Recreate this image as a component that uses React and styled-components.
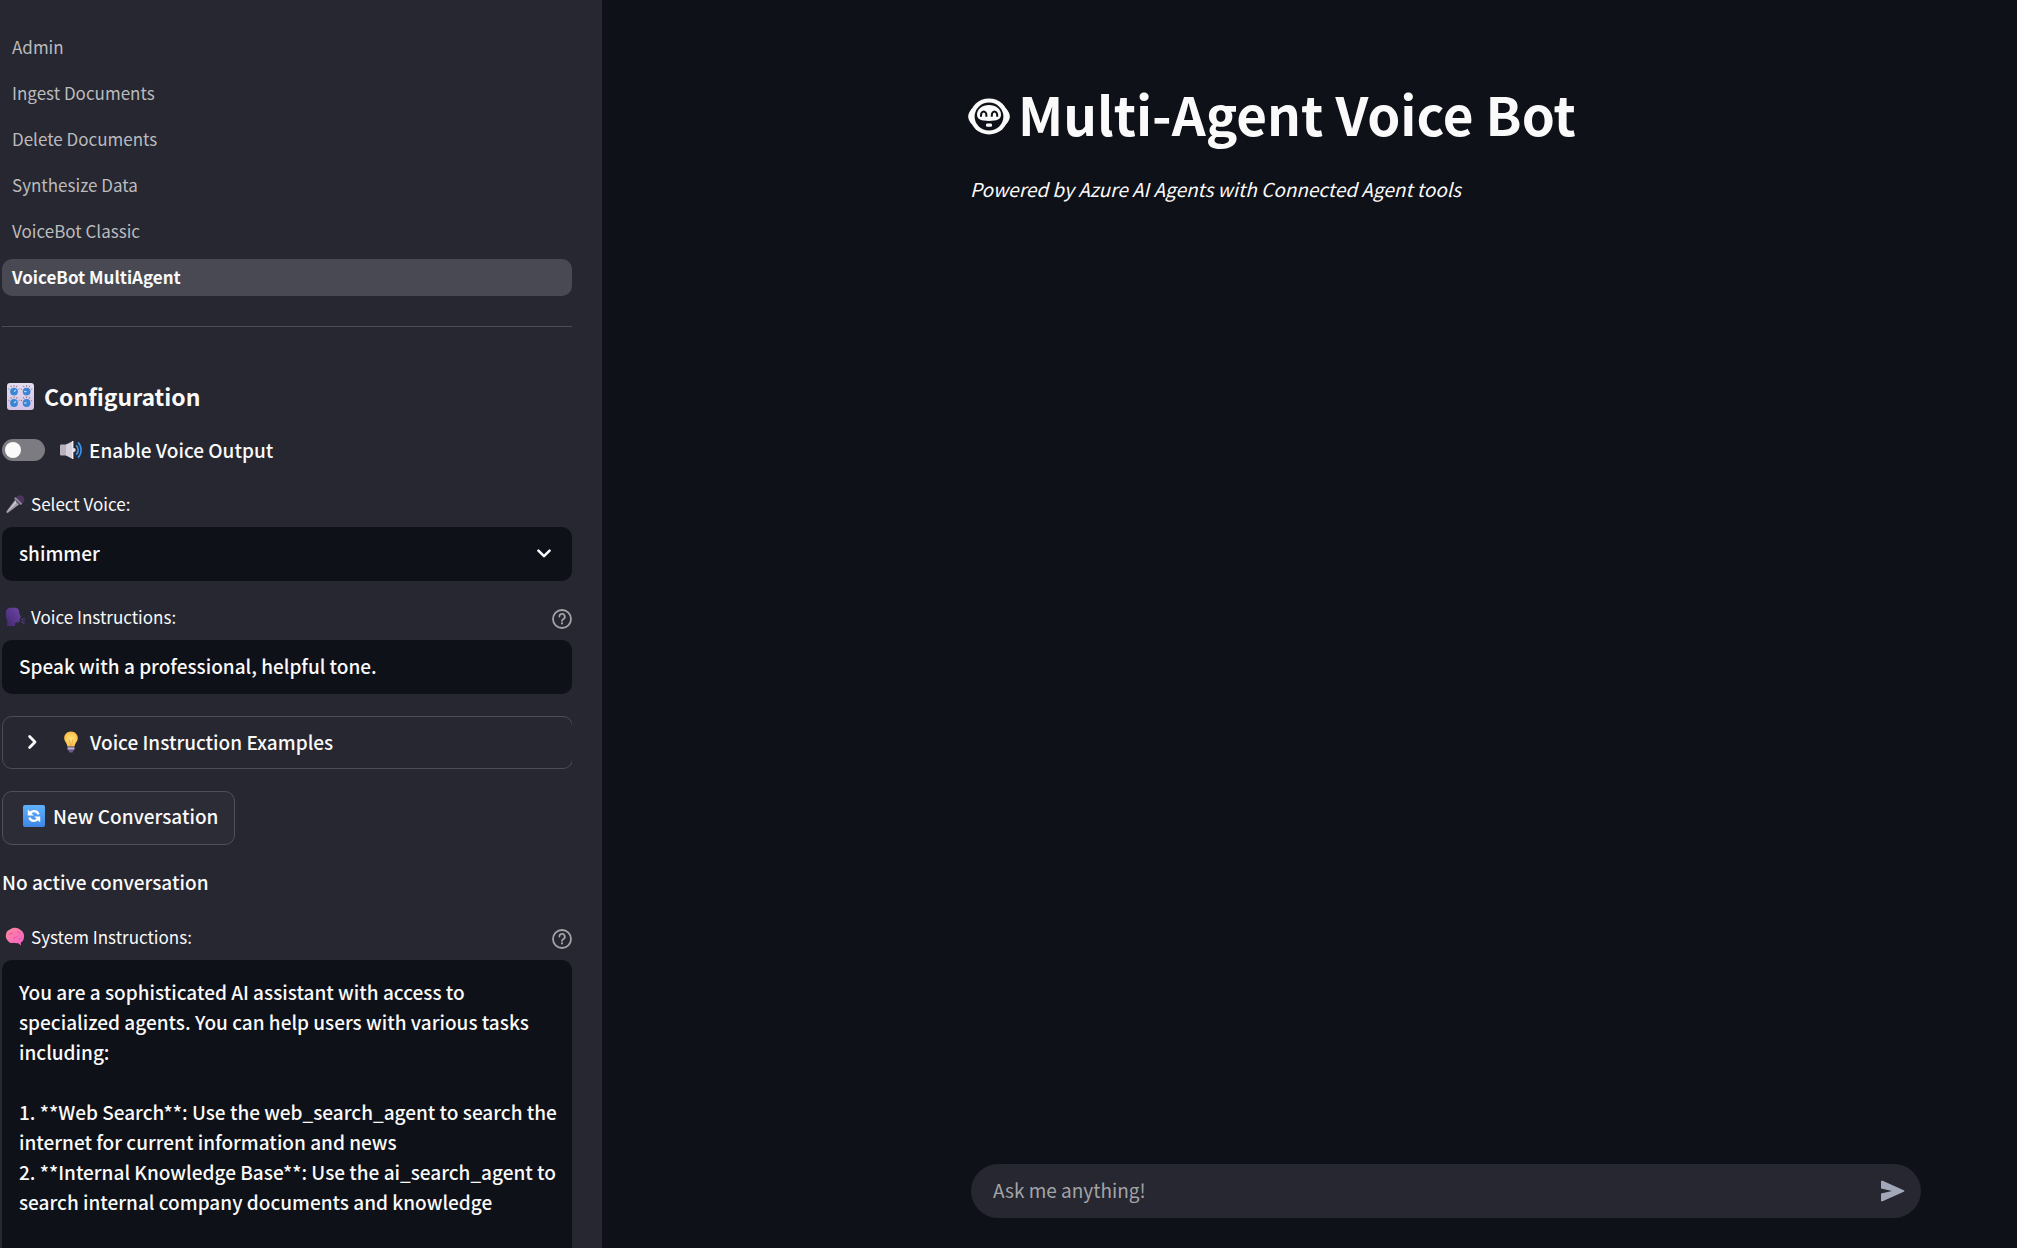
import React, { useId, useState } from "react";
import styled, { createGlobalStyle } from "styled-components";

const GlobalStyle = createGlobalStyle`
  * { box-sizing: border-box; }
  body {
    margin: 0;
    background: #0e1117;
    color: #fafafa;
    font-family: "Noto Sans CJK SC", "Noto Sans", sans-serif;
    font-size: 19px;
    line-height: 30px;
    overflow: hidden;
  }
  button, input, select, textarea { font: inherit; color: inherit; }
`;

const Layout = styled.div`
  display: flex;
  height: 100vh;
`;

const Sidebar = styled.aside`
  flex: 0 0 602px;
  padding: 29px 30px 0 2px;
  background: #262730;
  font-weight: 500;
  overflow: hidden;
`;

const Nav = styled.nav`
  display: flex;
  flex-direction: column;
  gap: 9px;
  padding-bottom: 30px;
  border-bottom: 1px solid #4b4c54;
`;

const NavLink = styled.a`
  height: 37px;
  padding: 0 10px;
  border-radius: 10px;
  font-size: 17px;
  line-height: 36px;
  text-decoration: none;
  color: ${(p) => (p.$active ? "#fafafa" : "#bbbbbe")};
  font-weight: ${(p) => (p.$active ? 700 : 400)};
  background: ${(p) => (p.$active ? "#484953" : "transparent")};
`;

const Panel = styled.section`
  display: flex;
  flex-direction: column;
  gap: 22px;
  padding-top: 51px;
  overflow: hidden;
`;

const PanelTitle = styled.h2`
  display: flex;
  align-items: center;
  gap: 10px;
  margin: 0 0 -4px;
  padding-left: 5px;
  font-size: 23px;
  line-height: 36px;
  font-weight: 700;
`;

const ToggleRow = styled.label`
  display: flex;
  align-items: center;
  height: 36px;
`;

const Toggle = styled.input`
  appearance: none;
  display: flex;
  align-items: center;
  width: 43px;
  height: 22px;
  margin: 0 14px 0 0;
  padding: 0 3px;
  border-radius: 11px;
  background: #7c7b81;
  &::before {
    content: "";
    width: 16px;
    height: 16px;
    border-radius: 50%;
    background: #fafafa;
  }
  &:checked { justify-content: flex-end; background: #ff4b4b; }
`;

const ToggleText = styled.span`
  display: flex;
  align-items: center;
  gap: 6px;
`;

const Field = styled.div`
  display: flex;
  flex-direction: column;
  gap: 11px;
  padding-top: 2px;
`;

const FieldHead = styled.div`
  display: flex;
  align-items: center;
  justify-content: space-between;
  height: 24px;
`;

const Label = styled.label`
  display: flex;
  align-items: center;
  gap: 6px;
  padding-left: 3px;
  font-size: 17px;
  line-height: 24px;
  font-weight: 400;
`;

const HelpButton = styled.button`
  display: flex;
  padding: 3px 0 0;
  border: 0;
  background: none;
  color: #a3a3a7;
`;

const SelectWrap = styled.div`
  display: grid;
  align-items: center;
  > * { grid-area: 1 / 1; }
  > svg { justify-self: end; margin-right: 20px; pointer-events: none; }
`;

const Select = styled.select`
  appearance: none;
  width: 100%;
  height: 54px;
  padding: 0 17px 3px;
  border: 0;
  border-radius: 10px;
  background: #0e1117;
`;

const TextInput = styled.input`
  width: 100%;
  height: 54px;
  padding: 0 17px 3px;
  border: 0;
  border-radius: 10px;
  background: #0e1117;
`;

const TextArea = styled.textarea`
  display: block;
  width: 100%;
  height: 460px;
  padding: 17px 12px 16px 17px;
  border: 0;
  border-radius: 10px;
  background: #0e1117;
  resize: none;
  overflow: hidden;
`;

const Expander = styled.details`
  margin-right: -1px;
  border: 1px solid #4b4c54;
  border-radius: 10px;
`;

const Summary = styled.summary`
  display: flex;
  align-items: center;
  height: 51px;
  padding: 0 20px 2px 19px;
  list-style: none;
  > svg:first-child { margin-right: 18px; }
`;

const SummaryText = styled.span`
  display: flex;
  align-items: center;
  gap: 8px;
`;

const NewButton = styled.button`
  display: flex;
  align-items: center;
  align-self: flex-start;
  gap: 8px;
  height: 54px;
  padding: 0 16px 4px 20px;
  border: 1px solid #4f5058;
  border-radius: 10px;
  background: #2b2c36;
`;

const Status = styled.p`
  margin: 0 0 4px;
`;

const Main = styled.main`
  flex: 1;
  display: flex;
  flex-direction: column;
  align-items: flex-end;
  padding: 80px 96px 30px 32px;
`;

const Column = styled.div`
  display: flex;
  flex-direction: column;
  flex: 1;
  width: 100%;
  max-width: 950px;
`;

const Title = styled.h1`
  display: flex;
  align-items: center;
  gap: 8px;
  margin: 0 0 0 -3px;
  font-size: 53px;
  line-height: 66px;
  font-weight: 700;
  > svg { margin-top: 6px; }
`;

const Tagline = styled.p`
  margin: 28px 0 0 -1px;
  font-style: italic;
`;

const ChatForm = styled.form`
  display: flex;
  align-items: center;
  height: 54px;
  margin-top: auto;
  padding: 0 16px 0 22px;
  border-radius: 27px;
  background: #262730;
`;

const ChatInput = styled.input`
  flex: 1;
  height: 54px;
  padding: 0 0 4px;
  border: 0;
  outline: 0;
  background: none;
  &::placeholder { color: #a3a3a7; opacity: 1; }
`;

const SendButton = styled.button`
  display: flex;
  padding: 0;
  border: 0;
  background: none;
  color: #a3a8b8;
`;

const HelpIcon = () => (
  <svg width="20" height="20" viewBox="0 0 20 20" fill="none" stroke="currentColor" strokeWidth="1.8" strokeLinecap="round">
    <circle cx="10" cy="10" r="9" />
    <path d="M7.4 7.6a2.7 2.7 0 1 1 4 2.4c-1 .6-1.4 1-1.4 1.9" />
    <path d="M10 14.4v.1" strokeWidth="2.1" />
  </svg>
);

const ChevronDown = () => (
  <svg width="16" height="12" viewBox="0 0 16 12" fill="none" stroke="#fafafa" strokeWidth="2.6" strokeLinecap="round" strokeLinejoin="round">
    <path d="M2.4 2.6 8 8.2l5.6-5.6" />
  </svg>
);

const ChevronRight = () => (
  <svg width="20" height="16" viewBox="0 0 20 16" fill="none" stroke="#fafafa" strokeWidth="2.8" strokeLinecap="round" strokeLinejoin="round">
    <path d="M7.600 2.600 13 8l-5.400 5.400" />
  </svg>
);

const KnobsIcon = () => (
  <svg width="27" height="27" viewBox="0 0 27 27">
    <defs>
      <linearGradient id="knobs" x1="0" y1="0" x2="0" y2="1">
        <stop offset="0" stopColor="#e6dcf0" />
        <stop offset="1" stopColor="#d3c3e6" />
      </linearGradient>
    </defs>
    <rect width="27" height="27" rx="3" fill="url(#knobs)" />
    {[[7, 8.6], [19.6, 8.6], [7, 20], [19.6, 20]].map(([x, y], i) => (
      <g key={i}>
        <path
          d={`M${x - 4.6} ${y - 2.2}l-1-.6M${x + 4.6} ${y - 2.2}l1-.6M${x - 2.4} ${y - 4.4}l-.8-1.4M${x + 2.4} ${y - 4.4}l.8-1.4M${x} ${y - 5}v-1.4`}
          stroke="#6d6378"
          strokeWidth=".9"
        />
        <circle cx={x} cy={y} r="3.9" fill="#3b86d4" />
        <path d={i % 2 ? `M${x} ${y}h-2.6` : `M${x} ${y}l2-1.6`} stroke="#bfe0ff" strokeWidth="1.1" />
      </g>
    ))}
  </svg>
);

const SpeakerIcon = () => (
  <svg width="24" height="20" viewBox="0 0 24 20" fill="none">
    <rect x="1" y="4.600" width="8" height="11" rx="1" fill="#b9b1bd" />
    <path d="M7 4.600 13.6 1.2V19L7 15.6z" fill="#d8d0dc" />
    <path d="M13 1h1.400v18h-1.400z" fill="#efe9f2" />
    <circle cx="14.8" cy="10" r="1.9" fill="#e7e1ea" />
    <path d="M17.200 5.200a6.800 6.800 0 0 1 0 9.600" stroke="#3f9bf0" strokeWidth="1.600" />
    <path d="M19 2.400a10.800 10.800 0 0 1 0 15.200" stroke="#3a93ea" strokeWidth="1.600" />
  </svg>
);

const MicIcon = () => (
  <svg width="20" height="20" viewBox="0 0 20 20">
    <path d="M10.4 5.6 14.6 10 3 18.8c-1 .6-2-.4-1.6-1.4z" fill="#a39ca8" />
    <path d="M10.6 7 12 8.4 2.2 17.8z" fill="#cfc8d2" />
    <circle cx="15" cy="5.6" r="4.4" fill="#4b3560" />
    <path d="m10.6 3 6.8 6.8-1.6 1.2-6.8-6.6z" fill="#8d8494" />
  </svg>
);

const HeadIcon = () => (
  <svg width="20" height="20" viewBox="0 0 20 20">
    <defs>
      <linearGradient id="head" x1="1" y1="0" x2="0" y2="1">
        <stop offset="0" stopColor="#6d47a8" />
        <stop offset="1" stopColor="#44286e" />
      </linearGradient>
    </defs>
    <path d="M5 .8h5.600c2.600.2 3.600 2.200 3.600 4.800.1 1.600 1.600 3.600 1.600 4.400 0 .7-1 .8-1 1.400.2 1 .1 1.400-.2 1.800.2 1-.1 2.400-2 2.400-1.600 0-2.200.2-2.400 1.200l-.2 2.200H1.800l.6-5.200C1.200 11.800.8 9.600.8 6.600.8 3.400 2 1.200 5 .8z" fill="url(#head)" />
    <g fill="#5c3b93">
      <circle cx="17" cy="12.400" r=".9" />
      <circle cx="19" cy="11.600" r=".8" />
      <circle cx="17" cy="15" r=".9" />
      <circle cx="19" cy="14" r=".8" />
      <circle cx="18.800" cy="16.400" r=".8" />
    </g>
  </svg>
);

const BrainIcon = () => (
  <svg width="20" height="20" viewBox="0 0 20 20">
    <defs>
      <linearGradient id="brain" x1="0" y1="0" x2="1" y2="1">
        <stop offset="0" stopColor="#ff8a9c" />
        <stop offset="1" stopColor="#f45fc8" />
      </linearGradient>
    </defs>
    <path d="M5 2.600C8-.2 13 .4 15.200 2.800c2.600 1 4.200 4.400 3.800 7.200-.2 3-1.400 5-3.200 5.400l.2 3.200-3.200-2.600c-1.400.6-3 .2-4-.2-2.400.6-4.800.2-5.600-1.800C1.400 12.600.4 9.600 1 7.600 1.200 5.200 2.800 3.200 5 2.600z" fill="url(#brain)" />
    <path d="M3.600 7.600c1.600-1.600 3-.4 4.400-2M8.400 11c1.800.4 2.400-1.800 4.200-1.400M12 4.600c1.400 0 1.600 1.800 3.200 1.600M13.600 12.600c1.200-.2 1.400-1.600 2.800-1.600" stroke="#d8479f" strokeWidth=".8" fill="none" />
  </svg>
);

const BulbIcon = () => (
  <svg width="22" height="22" viewBox="0 0 22 22">
    <defs>
      <radialGradient id="bulb" cx=".5" cy=".55" r=".6">
        <stop offset="0" stopColor="#ffe680" />
        <stop offset="1" stopColor="#fbb63f" />
      </radialGradient>
    </defs>
    <path d="M11 .4c4 0 6.800 2.900 6.800 6.700 0 3.400-2.700 4.700-3.200 8.300H7.400C6.900 11.800 4.200 10.500 4.200 7.100 4.200 3.300 7 .4 11 .4z" fill="url(#bulb)" />
    <path d="M9.400 8.600 10.400 15M12.600 8.600l-1 6.400" stroke="#f39a2c" strokeWidth=".8" />
    <rect x="7.600" y="15.400" width="6.800" height="4.200" rx="1" fill="#8e7fa8" />
    <path d="M7.600 17.400h6.800" stroke="#c3b6d4" strokeWidth="1" />
    <rect x="9" y="19.600" width="4" height="1.800" rx=".9" fill="#6e5f8c" />
  </svg>
);

const RefreshIcon = () => (
  <svg width="22" height="22" viewBox="0 0 22 22">
    <defs>
      <linearGradient id="refresh" x1="0" y1="0" x2="0" y2="1">
        <stop offset="0" stopColor="#5fb1fb" />
        <stop offset="1" stopColor="#3f86e8" />
      </linearGradient>
    </defs>
    <rect width="22" height="22" rx="2" fill="url(#refresh)" />
    <path d="M6.800 8.400C8.600 5.400 14 5 15.600 9.400M15.200 13.600C13.400 16.600 8 17 6.400 12.600" fill="none" stroke="#fff" strokeWidth="2.200" />
    <path d="M4.800 4.600v6h6zM17.200 17.400v-6h-6z" fill="#fff" />
  </svg>
);

const BotIcon = () => (
  <svg width="42" height="38" viewBox="0 0 42 38">
    <ellipse cx="21" cy="19.400" rx="19" ry="18" fill="#fafafa" />
    <path d="M4 11.500C1.600 14 .2 16.800.2 19.400s1.400 5.400 3.800 7.900h34c2.400-2.500 3.800-5.300 3.800-7.900s-1.400-5.400-3.800-7.900z" fill="#fafafa" />
    <ellipse cx="21" cy="19.600" rx="14.400" ry="14" fill="#0e1117" />
    <path d="M21 8c6.600 0 12 4 12 9.600 0 5-4 6.400-12 6.400S9 22.600 9 17.600C9 12 14.400 8 21 8z" fill="#fafafa" />
    <path d="M13 19.800v-1.600a2.700 3.800 0 0 1 5.400 0v1.600M23.800 19.800v-1.600a2.700 3.800 0 0 1 5.400 0v1.600" fill="none" stroke="#0e1117" strokeWidth="2" />
    <rect x="18" y="26.600" width="6" height="3.200" rx="1.200" fill="#fafafa" />
  </svg>
);

const SendIcon = () => (
  <svg width="24" height="22" viewBox="0 0 24 22" fill="currentColor">
    <path d="M0 1.600C0 .8.8.4 1.600.8l21.200 9.400c.8.300.8 1.300 0 1.600L1.600 21.200C.8 21.600 0 21.200 0 20.400V13.600L11 11 0 8.400z" />
  </svg>
);

const PAGES = ["Admin", "Ingest Documents", "Delete Documents", "Synthesize Data", "VoiceBot Classic", "VoiceBot MultiAgent"];

const SYSTEM_PROMPT = `You are a sophisticated AI assistant with access to specialized agents. You can help users with various tasks including:

1. **Web Search**: Use the web_search_agent to search the internet for current information and news
2. **Internal Knowledge Base**: Use the ai_search_agent to search internal company documents and knowledge
`;

function LabeledField({ icon, label, help, children }) {
  const id = useId();
  return (
    <Field>
      <FieldHead>
        <Label htmlFor={id}>
          {icon}
          {label}
        </Label>
        {help && (
          <HelpButton type="button" aria-label="Help">
            <HelpIcon />
          </HelpButton>
        )}
      </FieldHead>
      {children(id)}
    </Field>
  );
}

export default function App() {
  const [voiceOn, setVoiceOn] = useState(false);
  return (
    <>
      <GlobalStyle />
      <Layout>
        <Sidebar>
          <Nav>
            {PAGES.map((page) => (
              <NavLink key={page} href="#" $active={page === "VoiceBot MultiAgent"}>
                {page}
              </NavLink>
            ))}
          </Nav>
          <Panel>
            <PanelTitle>
              <KnobsIcon />
              Configuration
            </PanelTitle>
            <ToggleRow>
              <Toggle type="checkbox" role="switch" checked={voiceOn} onChange={(e) => setVoiceOn(e.target.checked)} />
              <ToggleText>
                <SpeakerIcon />
                Enable Voice Output
              </ToggleText>
            </ToggleRow>
            <LabeledField icon={<MicIcon />} label="Select Voice:">
              {(id) => (
                <SelectWrap>
                  <Select id={id} defaultValue="shimmer">
                    <option>shimmer</option>
                  </Select>
                  <ChevronDown />
                </SelectWrap>
              )}
            </LabeledField>
            <LabeledField icon={<HeadIcon />} label="Voice Instructions:" help>
              {(id) => <TextInput id={id} defaultValue="Speak with a professional, helpful tone." />}
            </LabeledField>
            <Expander>
              <Summary>
                <ChevronRight />
                <SummaryText>
                  <BulbIcon />
                  Voice Instruction Examples
                </SummaryText>
              </Summary>
            </Expander>
            <NewButton type="button">
              <RefreshIcon />
              New Conversation
            </NewButton>
            <Status>No active conversation</Status>
            <LabeledField icon={<BrainIcon />} label="System Instructions:" help>
              {(id) => <TextArea id={id} defaultValue={SYSTEM_PROMPT} spellCheck={false} />}
            </LabeledField>
          </Panel>
        </Sidebar>
        <Main>
          <Column>
            <Title>
              <BotIcon />
              Multi-Agent Voice Bot
            </Title>
            <Tagline>Powered by Azure AI Agents with Connected Agent tools</Tagline>
            <ChatForm onSubmit={(e) => e.preventDefault()}>
              <ChatInput aria-label="Message" placeholder="Ask me anything!" />
              <SendButton type="submit" aria-label="Send">
                <SendIcon />
              </SendButton>
            </ChatForm>
          </Column>
        </Main>
      </Layout>
    </>
  );
}
